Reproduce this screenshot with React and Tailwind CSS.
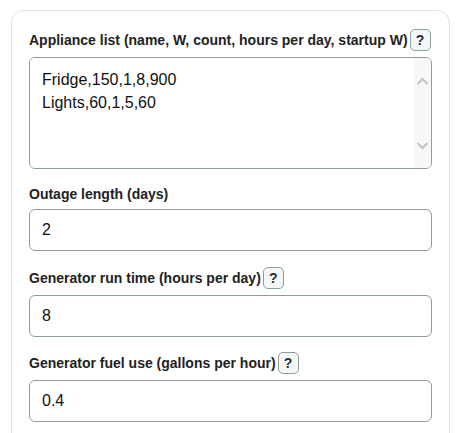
import { useState } from "react";

const fontStack = { fontFamily: '"Liberation Sans", Arial, sans-serif' };

function HelpButton() {
  return (
    <button
      type="button"
      className="ml-[2px] flex h-[22px] w-[21px] items-center justify-center rounded-[5px] border border-[#8d9e99] bg-[#f3f7f6] text-[14px] font-bold leading-none text-[#1f2d3a]"
    >
      ?
    </button>
  );
}

function FieldLabel({ children, help }) {
  return (
    <div className="mb-[6px] flex items-center">
      <label className="text-[14px] font-bold leading-[18px] text-[#222]">{children}</label>
      {help && <HelpButton />}
    </div>
  );
}

function Chevron({ up }) {
  return (
    <svg width="13" height="8" viewBox="0 0 13 8" fill="none">
      <path
        d={up ? "M1.5 7 L6.5 2 L11.5 7" : "M1.5 1 L6.5 6 L11.5 1"}
        stroke="#c2c2c2"
        strokeWidth="2"
      />
    </svg>
  );
}

function TextField({ label, help, value }) {
  const [val, setVal] = useState(value);
  return (
    <div className="mb-[15.5px]">
      <FieldLabel help={help}>{label}</FieldLabel>
      <input
        value={val}
        onChange={(e) => setVal(e.target.value)}
        className="block h-[42px] w-full rounded-[6px] border border-[#8d9e99] bg-white px-[12px] text-[16px] text-[#111] outline-none"
      />
    </div>
  );
}

export default function App() {
  const [list, setList] = useState("Fridge,150,1,8,900\nLights,60,1,5,60");

  return (
    <div className="min-h-screen bg-white px-[11px] pt-[10px]" style={fontStack}>
      <div className="rounded-[13px] border border-[#dde4e2] bg-white px-[17px] pb-[20px] pt-[18px]">
        <div className="mb-[16px]">
          <FieldLabel help>Appliance list (name, W, count, hours per day, startup W)</FieldLabel>
          <div className="flex h-[112px] overflow-hidden rounded-[6px] border border-[#8d9e99] bg-white">
            <textarea
              value={list}
              onChange={(e) => setList(e.target.value)}
              className="flex-1 resize-none overflow-hidden bg-white px-[12px] py-[10px] text-[16px] leading-[23px] text-[#111] outline-none"
            />
            <div className="flex w-[17px] flex-col items-center justify-between bg-[#f8f8f8] pb-[18px] pt-[19px]">
              <Chevron up />
              <Chevron />
            </div>
          </div>
        </div>

        <TextField label="Outage length (days)" value="2" />
        <TextField label="Generator run time (hours per day)" help value="8" />
        <TextField label="Generator fuel use (gallons per hour)" help value="0.4" />
      </div>
    </div>
  );
}
